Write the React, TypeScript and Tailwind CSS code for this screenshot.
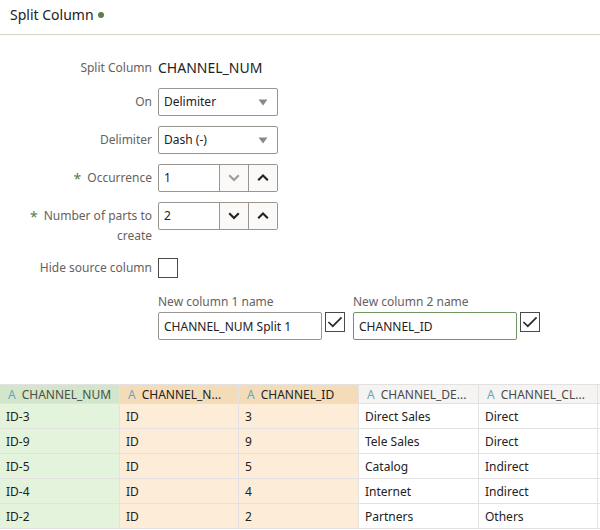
import { useId, useState } from "react";
import type { ReactNode } from "react";

type Tone = "source" | "preview" | "plain";

const columns: { name: string; tone: Tone; width: string }[] = [
  { name: "CHANNEL_NUM", tone: "source", width: "w-[120px]" },
  { name: "CHANNEL_N...", tone: "preview", width: "w-[119px]" },
  { name: "CHANNEL_ID", tone: "preview", width: "w-[120px]" },
  { name: "CHANNEL_DE...", tone: "plain", width: "w-[120px]" },
  { name: "CHANNEL_CL...", tone: "plain", width: "w-[119px]" },
];

const rows = [
  ["ID-3", "ID", "3", "Direct Sales", "Direct"],
  ["ID-9", "ID", "9", "Tele Sales", "Direct"],
  ["ID-5", "ID", "5", "Catalog", "Indirect"],
  ["ID-4", "ID", "4", "Internet", "Indirect"],
  ["ID-2", "ID", "2", "Partners", "Others"],
];

const headTone: Record<Tone, string> = {
  source: "bg-[#d3e6cb] text-[#4a4f48]",
  preview: "bg-[#f5dcb9] text-[#222222]",
  plain: "bg-[#f5f4f2] text-[#4a4a4a]",
};

const cellTone: Record<Tone, string> = {
  source: "bg-[#e4f3dc]",
  preview: "bg-[#fcecd8]",
  plain: "bg-white",
};

function Row({ label, htmlFor, required, children }: { label: string; htmlFor?: string; required?: boolean; children: ReactNode }) {
  return (
    <div className="flex items-start gap-1.5">
      <label htmlFor={htmlFor} className="w-[152px] shrink-0 pl-5 pt-1 text-right leading-5 text-[#66625f]">
        {required && <span className="mr-1.5 align-middle text-[14px] leading-none text-[#5a7d48]">*</span>}
        {label}
      </label>
      {children}
    </div>
  );
}

function Select({ id, options }: { id: string; options: string[] }) {
  return (
    <div className="relative w-[120px]">
      <select id={id} className="h-7 w-full appearance-none rounded-xs border border-[#9b9590] bg-white pl-[5px] text-[#222222]">
        {options.map((option) => (
          <option key={option}>{option}</option>
        ))}
      </select>
      <svg className="pointer-events-none absolute right-2.5 top-[11px]" width="10" height="7" viewBox="0 0 10 7" aria-hidden="true">
        <path d="M0.5 0.5H9.5L5 6.5Z" fill="#858a8d" />
      </svg>
    </div>
  );
}

function Spinner({ id, initial }: { id: string; initial: number }) {
  const [value, setValue] = useState(initial);
  const button = "flex w-[29px] items-center justify-center border-l border-[#9b9590] bg-[#fbf9f8] text-[#222222] disabled:text-[#9c9c9c]";
  return (
    <div className="flex h-7 w-[120px] overflow-hidden rounded-xs border border-[#9b9590] bg-white">
      <input
        id={id}
        value={value}
        onChange={(e) => setValue(Number(e.target.value) || 1)}
        className="min-w-0 flex-1 pl-[5px] text-[#222222] outline-none"
      />
      <button type="button" aria-label="Decrease" disabled={value <= 1} onClick={() => setValue(value - 1)} className={button}>
        <svg width="12" height="8" viewBox="0 0 12 8" fill="none" stroke="currentColor" strokeWidth="2.1" aria-hidden="true">
          <path d="M1.2 1.2L6 6L10.8 1.2" />
        </svg>
      </button>
      <button type="button" aria-label="Increase" onClick={() => setValue(value + 1)} className={button}>
        <svg width="12" height="8" viewBox="0 0 12 8" fill="none" stroke="currentColor" strokeWidth="2.1" aria-hidden="true">
          <path d="M1.2 6.3L6 1.5L10.8 6.3" />
        </svg>
      </button>
    </div>
  );
}

function Checkbox({ id, label, checked }: { id?: string; label?: string; checked?: boolean }) {
  return (
    <span className="relative block size-5">
      <input
        id={id}
        type="checkbox"
        aria-label={label}
        defaultChecked={checked}
        className="peer block size-5 appearance-none border border-[#4a4a4a] bg-white"
      />
      <svg
        className="pointer-events-none absolute left-0 top-0 hidden peer-checked:block"
        width="20"
        height="20"
        viewBox="0 0 20 20"
        fill="none"
        stroke="#2e2e2e"
        strokeWidth="1.7"
        aria-hidden="true"
      >
        <path d="M3.4 10L7.8 14.2L16.6 5.4" />
      </svg>
    </span>
  );
}

function NameField({ label, value, border }: { label: string; value: string; border: string }) {
  const id = useId();
  return (
    <div>
      <label htmlFor={id} className="block leading-5 text-[#66625f]">
        {label}
      </label>
      <div className="flex items-start gap-[3px]">
        <input id={id} defaultValue={value} className={`h-7 w-[164px] rounded-xs border bg-white pl-[5px] text-[#222222] ${border}`} />
        <Checkbox label={`Include ${value}`} checked />
      </div>
    </div>
  );
}

export default function App() {
  return (
    <div className="bg-white font-['Noto_Sans',sans-serif] text-[12px] text-[#222222]">
      <header className="flex h-[35px] items-center gap-1 border-b border-[#d6d3c8] px-2.5 pb-1">
        <h1 className="text-[14px] leading-5">Split Column</h1>
        <span className="size-1.5 rounded-full bg-[#5a8047]" />
      </header>

      <form className="flex flex-col gap-2.5 pt-[19px]">
        <Row label="Split Column">
          <span className="h-5 pt-1 text-[14px] leading-5">CHANNEL_NUM</span>
        </Row>
        <Row label="On" htmlFor="on">
          <Select id="on" options={["Delimiter", "Pattern", "Position"]} />
        </Row>
        <Row label="Delimiter" htmlFor="delimiter">
          <Select id="delimiter" options={["Dash (-)", "Comma (,)", "Space"]} />
        </Row>
        <Row label="Occurrence" htmlFor="occurrence" required>
          <Spinner id="occurrence" initial={1} />
        </Row>
        <Row label="Number of parts to create" htmlFor="parts" required>
          <Spinner id="parts" initial={2} />
        </Row>
        <div className="flex items-start gap-1.5 pt-0.5">
          <label htmlFor="hide" className="w-[152px] shrink-0 text-right leading-5 text-[#66625f]">
            Hide source column
          </label>
          <Checkbox id="hide" />
        </div>
        <div className="flex gap-2 pl-[158px] pt-1">
          <NameField label="New column 1 name" value="CHANNEL_NUM Split 1" border="border-[#9b9590]" />
          <NameField label="New column 2 name" value="CHANNEL_ID" border="border-[#6f9660]" />
        </div>
      </form>

      <table className="mt-11 w-full table-fixed border-separate border-spacing-0">
        <thead>
          <tr>
            {columns.map((column) => (
              <th
                key={column.name}
                scope="col"
                className={`h-5 border-b border-r border-t border-[#e3e1e1] p-0 pl-2 pt-0.5 text-left font-normal leading-4 ${column.width} ${headTone[column.tone]}`}
              >
                <div className="flex items-center gap-1.5">
                  <span className="text-[#6da5bd]">A</span>
                  <span>{column.name}</span>
                </div>
              </th>
            ))}
            <td className="border-b border-t border-[#e3e1e1] bg-[#f5f4f2] p-0" />
          </tr>
        </thead>
        <tbody>
          {rows.map((row) => (
            <tr key={row[0]}>
              {row.map((value, i) => (
                <td
                  key={columns[i].name}
                  className={`h-[25px] border-b border-r border-[#e3e1e1] p-0 pl-1.5 pt-0.5 leading-5 ${cellTone[columns[i].tone]}`}
                >
                  {value}
                </td>
              ))}
              <td className="border-b border-[#e3e1e1] p-0" />
            </tr>
          ))}
        </tbody>
      </table>
    </div>
  );
}
